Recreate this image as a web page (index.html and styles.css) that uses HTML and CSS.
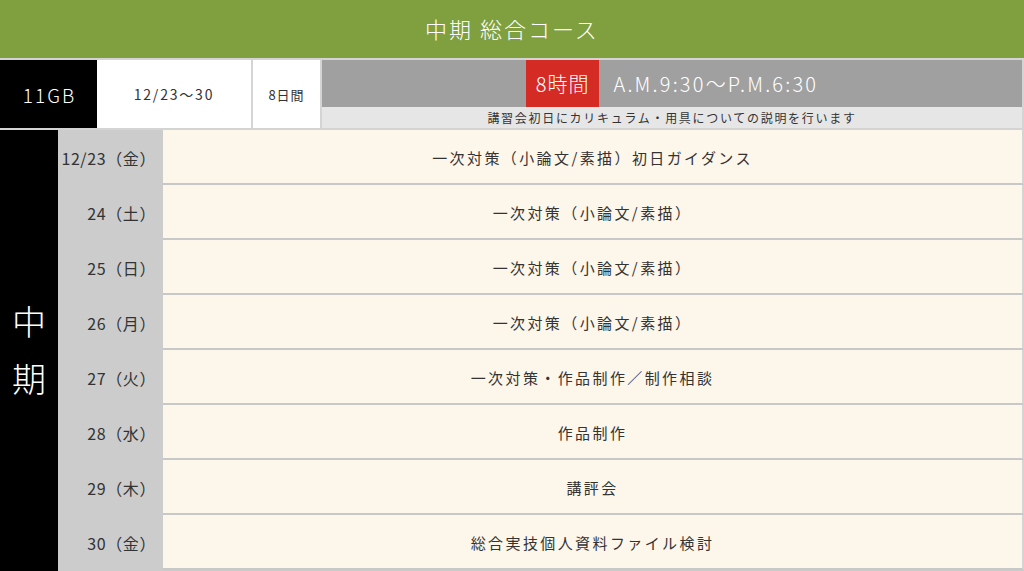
FILE: index.html
```html
<!DOCTYPE html>
<html lang="ja">
<head>
<meta charset="utf-8">
<title>中期 総合コース</title>
<link rel="stylesheet" href="styles.css">
</head>
<body>
<div class="page">
  <header class="title">中期 総合コース</header>
  <div class="info">
    <div class="cls">11GB</div>
    <div class="dates">12/23〜30</div>
    <div class="days">8日間</div>
    <div class="time">
      <div class="time-top">
        <span class="hours">8時間</span>
        <span class="range">A.M.9:30〜P.M.6:30</span>
      </div>
      <div class="time-note">講習会初日にカリキュラム・用具についての説明を行います</div>
    </div>
  </div>
  <div class="schedule">
    <div class="term"><span>中</span><span>期</span></div>
    <div class="rows">
      <div class="row"><div class="date">12/23（金）</div><div class="desc">一次対策（小論文/素描）初日ガイダンス</div></div>
      <div class="row"><div class="date">24（土）</div><div class="desc">一次対策（小論文/素描）</div></div>
      <div class="row"><div class="date">25（日）</div><div class="desc">一次対策（小論文/素描）</div></div>
      <div class="row"><div class="date">26（月）</div><div class="desc">一次対策（小論文/素描）</div></div>
      <div class="row"><div class="date">27（火）</div><div class="desc">一次対策・作品制作／制作相談</div></div>
      <div class="row"><div class="date">28（水）</div><div class="desc">作品制作</div></div>
      <div class="row"><div class="date">29（木）</div><div class="desc">講評会</div></div>
      <div class="row"><div class="date">30（金）</div><div class="desc">総合実技個人資料ファイル検討</div></div>
    </div>
  </div>
</div>
</body>
</html>
```

FILE: styles.css
```css
* { box-sizing: border-box; }
html, body { margin: 0; padding: 0; }
body {
  font-family: "Noto Sans CJK JP", "Noto Sans", sans-serif;
  font-weight: 400;
  background: #ffffff;
  color: #333333;
}
.page { width: 1024px; }

.title {
  height: 60px;
  background: #80a040;
  border-bottom: 2px solid #d4d4d4;
  color: #ffffff;
  font-size: 22px;
  font-weight: 300;
  letter-spacing: 2px;
  display: flex;
  align-items: center;
  justify-content: center;
  padding-bottom: 3px;
}

.info {
  display: flex;
  height: 70px;
  border-bottom: 2px solid #d4d4d4;
  border-right: 2px solid #d4d4d4;
}
.cls {
  width: 97px;
  background: #000000;
  color: #ffffff;
  font-size: 19px;
  font-weight: 300;
  letter-spacing: 2px;
  display: flex;
  align-items: center;
  justify-content: center;
  padding-left: 2px;
}
.dates {
  width: 156px;
  background: #ffffff;
  border-right: 2px solid #d4d4d4;
  font-size: 14px;
  letter-spacing: 1.8px;
  display: flex;
  align-items: center;
  justify-content: center;
}
.days {
  width: 69px;
  background: #ffffff;
  border-right: 2px solid #d4d4d4;
  font-size: 13px;
  letter-spacing: 1px;
  display: flex;
  align-items: center;
  justify-content: center;
}
.time {
  flex: 1;
  display: flex;
  flex-direction: column;
}
.time-top {
  height: 47px;
  background: #a0a0a0;
  display: flex;
  justify-content: center;
  align-items: stretch;
  gap: 14px;
  color: #ffffff;
  font-weight: 300;
}
.hours {
  background: #d42b24;
  font-size: 20px;
  letter-spacing: 1px;
  padding: 0 10px;
  display: flex;
  align-items: center;
}
.range {
  font-size: 20px;
  letter-spacing: 2.2px;
  display: flex;
  align-items: center;
}
.time-note {
  flex: 1;
  background: #e6e6e6;
  font-size: 12px;
  letter-spacing: 1.7px;
  display: flex;
  align-items: center;
  justify-content: center;
}

.schedule {
  display: flex;
  height: 441px;
}
.term {
  width: 58px;
  background: #000000;
  color: #ffffff;
  font-size: 34px;
  font-weight: 300;
  line-height: 57px;
  display: flex;
  flex-direction: column;
  align-items: center;
  justify-content: center;
  padding-bottom: 4px;
}
.rows {
  flex: 1;
  display: flex;
  flex-direction: column;
  background: #cccccc;
}
.row {
  display: flex;
  height: 55px;
  flex-shrink: 0;
}
.date {
  width: 105px;
  background: #cccccc;
  font-size: 16px;
  letter-spacing: 0.6px;
  display: flex;
  align-items: center;
  justify-content: flex-end;
  padding-right: 7px;
}
.desc {
  flex: 1;
  background: #fdf6ea;
  border-bottom: 2px solid #c8c8c8;
  border-right: 2px solid #d4d4d4;
  font-size: 15px;
  letter-spacing: 2.4px;
  display: flex;
  align-items: center;
  justify-content: center;
  padding-top: 1px;
}
```
